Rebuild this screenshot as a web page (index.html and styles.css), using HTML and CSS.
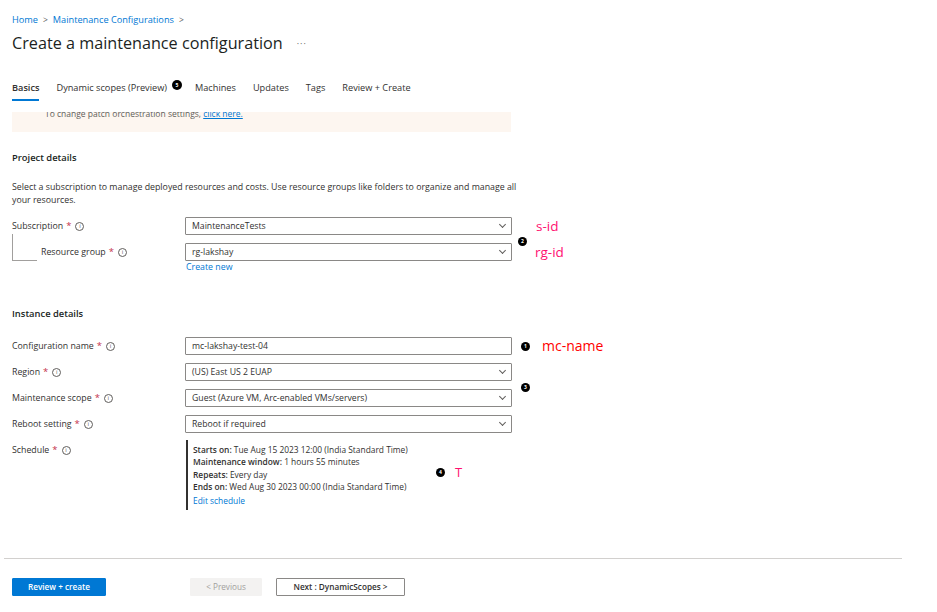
FILE: index.html
```html
<!DOCTYPE html>
<html>
<head>
<meta charset="utf-8">
<link rel="stylesheet" href="styles.css">
</head>
<body>
<div class="page">
  <nav class="breadcrumb">
    <a class="crumb">Home</a><span class="sep">&gt;</span><a class="crumb">Maintenance Configurations</a><span class="sep">&gt;</span>
  </nav>
  <div class="title-row">
    <h1 class="title">Create a maintenance configuration</h1>
    <span class="more">···</span>
  </div>
  <div class="tabs">
    <span class="tab active">Basics</span>
    <span class="tab">Dynamic scopes (Preview)<span class="badge tab-badge">5</span></span>
    <span class="tab">Machines</span>
    <span class="tab">Updates</span>
    <span class="tab">Tags</span>
    <span class="tab">Review + Create</span>
  </div>
  <div class="banner">
    <div class="banner-text">To change patch orchestration settings, <a class="link u">click here.</a></div>
  </div>

  <h2 class="section">Project details</h2>
  <p class="desc">Select a subscription to manage deployed resources and costs. Use resource groups like folders to organize and manage all your resources.</p>

  <div class="row">
    <div class="label">Subscription <span class="req">*</span><span class="info">i</span></div>
    <div class="select">MaintenanceTests<span class="chev"></span></div>
    <div class="note">
      <span class="tag pink">s-id</span>
    </div>
  </div>
  <div class="row gap">
    <div class="label sub"><span class="tree"></span>Resource group <span class="req">*</span><span class="info">i</span></div>
    <div class="select">rg-lakshay<span class="chev"></span></div>
    <div class="note rg-note">
      <span class="badge b2">2</span>
      <span class="tag pink">rg-id</span>
    </div>
  </div>
  <div class="row create">
    <div class="label"></div>
    <a class="link">Create new</a>
  </div>

  <h2 class="section inst">Instance details</h2>

  <div class="row first">
    <div class="label">Configuration name <span class="req">*</span><span class="info">i</span></div>
    <div class="select input">mc-lakshay-test-04</div>
    <div class="note"><span class="badge b1">1</span><span class="tag red">mc-name</span></div>
  </div>
  <div class="row gap">
    <div class="label">Region <span class="req">*</span><span class="info">i</span></div>
    <div class="select">(US) East US 2 EUAP<span class="chev"></span></div>
  </div>
  <div class="row gap">
    <div class="label">Maintenance scope <span class="req">*</span><span class="info">i</span></div>
    <div class="select">Guest (Azure VM, Arc-enabled VMs/servers)<span class="chev"></span></div>
    <div class="note"><span class="badge b3">3</span></div>
  </div>
  <div class="row gap">
    <div class="label">Reboot setting <span class="req">*</span><span class="info">i</span></div>
    <div class="select">Reboot if required<span class="chev"></span></div>
  </div>
  <div class="row sched-row">
    <div class="label top">Schedule <span class="req">*</span><span class="info">i</span></div>
    <div class="schedule">
      <div><b>Starts on:</b> Tue Aug 15 2023 12:00 (India Standard Time)</div>
      <div><b>Maintenance window:</b> 1 hours 55 minutes</div>
      <div><b>Repeats:</b> Every day</div>
      <div><b>Ends on:</b> Wed Aug 30 2023 00:00 (India Standard Time)</div>
      <div class="edit"><a class="link">Edit schedule</a></div>
    </div>
    <div class="sched-note"><span class="badge b4">4</span><span class="tag pink t">T</span></div>
  </div>
</div>
<div class="footer">
  <div class="rule"></div>
  <div class="actions">
    <button class="btn primary">Review + create</button>
    <button class="btn disabled">&lt; Previous</button>
    <button class="btn outline">Next : DynamicScopes &gt;</button>
  </div>
</div>
</body>
</html>
```
FILE: styles.css
```css
* { box-sizing: border-box; }
html, body { margin: 0; padding: 0; background: #fff; }
body {
  font-family: "Open Sans", "Noto Sans", "Liberation Sans", sans-serif;
  color: #323130;
  width: 937px;
  height: 612px;
  overflow: hidden;
}
.page { padding: 0 12px; }
a { text-decoration: none; }
.link { color: #0078d4; cursor: pointer; }
.u { text-decoration: underline; }

.breadcrumb {
  margin-top: 13px;
  height: 14px;
  line-height: 14px;
  font-size: 9.2px;
  display: flex;
  align-items: center;
}
.crumb { color: #0078d4; }
.sep { color: #605e5c; margin: 0 5px; font-size: 8.5px; }

.title-row {
  margin-top: 4px;
  height: 24px;
  display: flex;
  align-items: center;
}
.title {
  margin: 0;
  font-size: 16.2px;
  font-weight: 400;
  line-height: 24px;
  color: #201f1e;
}
.more { margin-left: 14px; color: #605e5c; font-size: 9px; letter-spacing: 1px; }

.tabs {
  margin-top: 21px;
  display: flex;
  font-size: 9.2px;
}
.tab {
  padding: 5px 0 4px;
  line-height: 14px;
  margin-right: 17px;
  border-bottom: 2px solid transparent;
  display: flex;
  align-items: center;
  color: #323130;
}
.tab.active { border-bottom-color: #0078d4; font-weight: 600; }

.badge {
  display: inline-flex;
  width: 9px;
  height: 9px;
  border-radius: 50%;
  background: #000;
  color: #fff;
  font-size: 5px;
  font-weight: 700;
  align-items: center;
  justify-content: center;
  line-height: 1;
}
.tab-badge { margin-left: 5px; margin-right: -4px; margin-top: -6px; width: 10px; height: 10px; }

.banner {
  margin-top: 11px;
  width: 499px;
  height: 20px;
  background: #fdf6f0;
  overflow: hidden;
}
.banner-text {
  margin-top: -3px;
  padding-left: 33px;
  font-size: 8.5px;
  line-height: 10px;
  color: #605e5c;
}

.section {
  margin: 19px 0 0;
  font-size: 9.4px;
  font-weight: 600;
  line-height: 14px;
  color: #201f1e;
}
.section.inst { margin-top: 34px; }
.desc {
  margin: 16px 0 0;
  width: 505px;
  font-size: 8.8px;
  line-height: 13px;
  color: #323130;
}

.row {
  display: flex;
  align-items: center;
  margin-top: 10px;
  font-size: 8.8px;
}
.row.gap { margin-top: 8px; }
.row.first { margin-top: 16px; }
.label {
  width: 173px;
  flex: none;
  display: flex;
  align-items: center;
  color: #323130;
  height: 18px;
}
.tree {
  align-self: flex-start;
  width: 25px;
  height: 27px;
  margin-top: -9px;
  margin-right: 4px;
  border-left: 1px solid #a19f9d;
  border-bottom: 1px solid #a19f9d;
  flex: none;
}
.req { color: #c4314b; margin-left: 3px; font-size: 9.5px; line-height: 10px; }
.info {
  margin-left: 4px;
  width: 9px;
  height: 9px;
  border: 1px solid #605e5c;
  border-radius: 50%;
  font-size: 6px;
  line-height: 7px;
  text-align: center;
  color: #605e5c;
  display: inline-block;
}
.select {
  position: relative;
  width: 327px;
  height: 18px;
  flex: none;
  border: 1px solid #8a8886;
  border-radius: 1px;
  padding-left: 6px;
  line-height: 16px;
  color: #323130;
  font-size: 8.7px;
}
.chev {
  position: absolute;
  right: 6px;
  top: 4px;
  width: 5px;
  height: 5px;
  border-right: 1px solid #605e5c;
  border-bottom: 1px solid #605e5c;
  transform: rotate(45deg);
}
.note {
  display: flex;
  align-items: center;
  height: 18px;
}
.tag { font-size: 13.5px; line-height: 18px; }
.pink { color: #ff0f6f; }
.red { color: #ff0000; }
.note .pink { margin-left: 24px; }
.rg-note .badge { margin-left: 6px; margin-top: -22px; }
.rg-note .pink { margin-left: 8px; }
.b1 { margin-left: 9px; }
.note .red { margin-left: 12px; font-size: 14px; }
.b3 { margin-left: 9px; margin-top: -22px; }

.row.create { margin-top: 0; height: 12px; }
.row.create .label { height: 12px; }
.row.create .link { font-size: 8.8px; line-height: 12px; padding-left: 1px; }

.sched-row { align-items: flex-start; margin-top: 7px; }
.label.top { margin-top: 3px; height: 14px; }
.schedule {
  width: 250px;
  border-left: 2px solid #323130;
  padding: 4px 0 2px 5px;
  margin-left: 1px;
  font-size: 8.4px;
  line-height: 12.3px;
  height: 70px;
  color: #323130;
}
.schedule b { font-weight: 600; }
.schedule .edit { margin-top: 2px; }
.sched-note { display: flex; align-items: center; margin-top: 23px; }
.t { margin-left: 10px; font-size: 13px; }

.footer { margin-top: 48px; }
.rule { margin-left: 4px; width: 898px; height: 1px; background: #d2d0ce; }
.actions {
  margin-top: 19px;
  padding-left: 12px;
  display: flex;
  align-items: center;
}
.btn {
  height: 18px;
  font-family: inherit;
  font-size: 8.2px;
  padding: 0;
  border-radius: 1px;
  line-height: 16px;
}
.primary {
  width: 94px;
  background: #0078d4;
  color: #fff;
  border: 1px solid #0078d4;
  font-weight: 600;
}
.disabled {
  margin-left: 84px;
  width: 72px;
  background: #f3f2f1;
  color: #a19f9d;
  border: 1px solid #f3f2f1;
}
.outline {
  margin-left: 14px;
  width: 129px;
  background: #fff;
  color: #323130;
  border: 1px solid #8a8886;
  font-weight: 600;
}
```
